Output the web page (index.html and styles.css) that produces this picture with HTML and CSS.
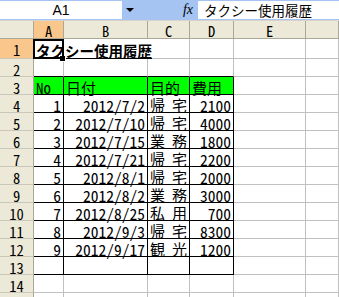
FILE: index.html
```html
<!DOCTYPE html>
<html lang="ja">
<head>
    <meta charset="utf-8">
    <title>タクシー使用履歴</title>
    <link rel="stylesheet" href="styles.css">
</head>
<body>
    <!-- formula bar -->
    <div class="formula-bar">
        <div class="name-box">A1</div>
        <div class="name-drop"><span class="arrow"></span></div>
        <div class="fx">fx</div>
        <div class="formula-input">タクシー使用履歴</div>
    </div>

    <!-- sheet -->
    <div class="sheet">
        <div class="c h ch"></div><div class="c h ch sel">A</div><div class="c h ch">B</div><div class="c h ch">C</div><div class="c h ch">D</div><div class="c h ch">E</div><div class="c h ch"></div>

        <div class="c h rh sel">1</div><div class="c title open">タクシー使用履歴</div><div class="c open"></div><div class="c"></div><div class="c"></div><div class="c"></div><div class="c"></div>
        <div class="c h rh">2</div><div class="c kb"></div><div class="c kb"></div><div class="c kb"></div><div class="c kb"></div><div class="c"></div><div class="c"></div>
        <div class="c h rh">3</div><div class="c k g">No</div><div class="c k g">日付</div><div class="c k g">目的</div><div class="c k g">費用</div><div class="c"></div><div class="c"></div>

        <div class="c h rh">4</div><div class="c k r">1</div><div class="c k r">2012/7/2</div><div class="c k d">帰宅</div><div class="c k r">2100</div><div class="c"></div><div class="c"></div>
        <div class="c h rh">5</div><div class="c k r">2</div><div class="c k r">2012/7/10</div><div class="c k d">帰宅</div><div class="c k r">4000</div><div class="c"></div><div class="c"></div>
        <div class="c h rh">6</div><div class="c k r">3</div><div class="c k r">2012/7/15</div><div class="c k d">業務</div><div class="c k r">1800</div><div class="c"></div><div class="c"></div>
        <div class="c h rh">7</div><div class="c k r">4</div><div class="c k r">2012/7/21</div><div class="c k d">帰宅</div><div class="c k r">2200</div><div class="c"></div><div class="c"></div>
        <div class="c h rh">8</div><div class="c k r">5</div><div class="c k r">2012/8/1</div><div class="c k d">帰宅</div><div class="c k r">2000</div><div class="c"></div><div class="c"></div>
        <div class="c h rh">9</div><div class="c k r">6</div><div class="c k r">2012/8/2</div><div class="c k d">業務</div><div class="c k r">3000</div><div class="c"></div><div class="c"></div>
        <div class="c h rh">10</div><div class="c k r">7</div><div class="c k r">2012/8/25</div><div class="c k d">私用</div><div class="c k r">700</div><div class="c"></div><div class="c"></div>
        <div class="c h rh">11</div><div class="c k r">8</div><div class="c k r">2012/9/3</div><div class="c k d">帰宅</div><div class="c k r">8300</div><div class="c"></div><div class="c"></div>
        <div class="c h rh">12</div><div class="c k r">9</div><div class="c k r">2012/9/17</div><div class="c k d">観光</div><div class="c k r">1200</div><div class="c"></div><div class="c"></div>
        <div class="c h rh">13</div><div class="c k"></div><div class="c k"></div><div class="c k"></div><div class="c k"></div><div class="c"></div><div class="c"></div>

        <div class="c h rh">14</div><div class="c"></div><div class="c"></div><div class="c"></div><div class="c"></div><div class="c"></div><div class="c"></div>
        <div class="c h rh"></div><div class="c"></div><div class="c"></div><div class="c"></div><div class="c"></div><div class="c"></div><div class="c"></div>
    </div>
</body>
</html>
```

FILE: styles.css
```css
body {
    margin: 0;
    width: 339px;
    height: 297px;
    overflow: hidden;
    background-color: #fff;
    font-family: "Noto Sans CJK JP", sans-serif;
    color: #000;
}

/* formula bar */
.formula-bar {
    display: flex;
    height: 21px;
    box-sizing: border-box;
    padding: 1px 0 1px;
    background-color: #a6c4f2;
    border-bottom: 1px solid #d6d3ce;
}

.name-box {
    width: 122px;
    background-color: #fff;
    text-align: center;
    font: 14px/18px "Liberation Sans", sans-serif;
}

.name-drop {
    width: 20px;
    display: flex;
    align-items: center;
    padding-left: 4px;
    box-sizing: border-box;
}

.arrow {
    width: 0;
    height: 0;
    border-left: 4px solid transparent;
    border-right: 4px solid transparent;
    border-top: 4px solid #000;
}

.fx {
    width: 56px;
    box-sizing: border-box;
    padding-right: 5px;
    text-align: right;
    font: italic 14px/18px "Liberation Serif", serif;
}

.formula-input {
    flex: 1;
    background-color: #fff;
    padding-left: 6px;
    font-size: 13.5px;
    line-height: 18px;
    white-space: nowrap;
}

/* sheet grid */
.sheet {
    display: grid;
    grid-template-columns: 34px 30px 84px 42px 44px 72px 1fr;
    grid-template-rows: 18px 20px;
    grid-auto-rows: 18px;
}

.c {
    box-sizing: border-box;
    border-right: 1px solid #c0c0c0;
    border-bottom: 1px solid #c0c0c0;
    padding: 4px 2px 0;
    font-size: 15.5px;
    line-height: 13px;
    white-space: nowrap;
    font-feature-settings: "hwid";
}

.h {
    background-color: #ece9d8;
    border-right-color: #aca899;
    border-bottom-color: #aca899;
    text-align: center;
    font-size: 14.5px;
}

.ch {
    padding-top: 3px;
}

.rh {
    border-bottom-color: #cbc7b8;
}

.sel {
    background-color: #f9c78c;
}

.title {
    position: relative;
    z-index: 1;
    padding-top: 5px;
    font-size: 14.5px;
    font-weight: bold;
    line-height: 14px;
    text-decoration: underline;
    font-feature-settings: normal;
}

/* selection frame and fill handle */
.title::after {
    content: "";
    position: absolute;
    left: -1px;
    top: 0;
    width: 31px;
    height: 20px;
    box-sizing: border-box;
    border: 2px solid #000;
}

.title::before {
    content: "";
    position: absolute;
    left: 25px;
    top: 16px;
    width: 5px;
    height: 5px;
    background-color: #000;
    border: 1px solid #fff;
}

.open {
    border-right-color: transparent;
}

.k {
    border-right-color: #000;
    border-bottom-color: #000;
}

.kb {
    border-bottom-color: #000;
}

.g {
    background-color: #00ff00;
    font-size: 15px;
}

.r {
    text-align: right;
}

/* distributed alignment */
.d {
    text-align: justify;
    text-align-last: justify;
    text-justify: inter-character;
    padding: 3px 2px 0 2px;
    font-size: 15px;
}
```
